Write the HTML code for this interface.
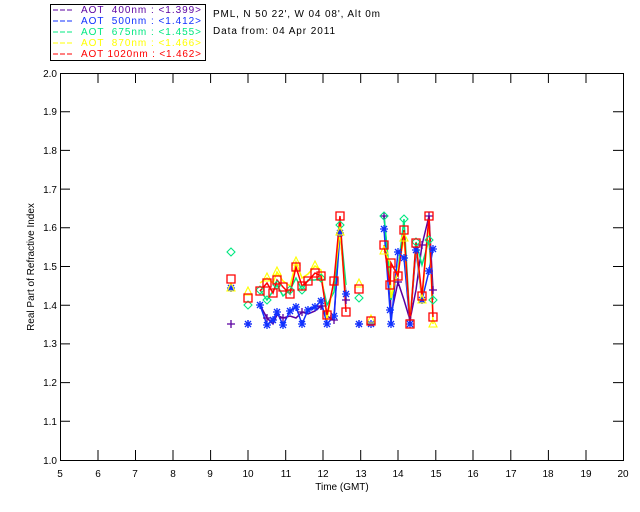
<!DOCTYPE html>
<html><head><meta charset="utf-8"><style>
body{margin:0;background:#fff;width:640px;height:512px;overflow:hidden}
svg{display:block}
text{font-family:"Liberation Sans",sans-serif;font-size:10px;white-space:pre}
</style></head><body>
<svg width="640" height="512" xmlns="http://www.w3.org/2000/svg">
<defs>
<path id="sq" d="M-4 -4h8v8h-8z" fill="none" stroke="red" stroke-width="1.3"/>
<path id="st" d="M-4 0h8M0 -4v8M-3 -3l6 6M-3 3l6 -6" stroke="#1030ff" stroke-width="1.3"/>
<path id="pl" d="M-4 0h8M0 -4v8" stroke="#5a00a0" stroke-width="1.3"/>
<path id="di" d="M0 -4l4 4l-4 4l-4 -4z" fill="none" stroke="#00e880" stroke-width="1.1"/>
<path id="tr" d="M0 -5l4 8h-8z" fill="none" stroke="#ffff00" stroke-width="1.1"/>
</defs>
<rect x="50.5" y="4.5" width="155" height="56" fill="none" stroke="#000"/>
<g stroke-width="1" stroke-dasharray="5,2">
<path d="M53 10h20" stroke="#5a00a0"/><path d="M53 21h20" stroke="#1030ff"/><path d="M53 32h20" stroke="#00e880"/><path d="M53 43h20" stroke="#ffff00"/><path d="M53 54h20" stroke="#ff0000"/>
</g>
<text x="81" y="13" fill="#5a00a0" textLength="120">AOT  400nm : &lt;1.399&gt;</text>
<text x="81" y="24" fill="#1030ff" textLength="120">AOT  500nm : &lt;1.412&gt;</text>
<text x="81" y="35" fill="#00e880" textLength="120">AOT  675nm : &lt;1.455&gt;</text>
<text x="81" y="46" fill="#ffff00" textLength="120">AOT  870nm : &lt;1.466&gt;</text>
<text x="81" y="57" fill="#ff0000" textLength="120">AOT 1020nm : &lt;1.462&gt;</text>
<text x="213" y="17" fill="#000" textLength="167">PML, N 50 22', W 04 08', Alt 0m</text>
<text x="213" y="34" fill="#000" textLength="122">Data from: 04 Apr 2011</text>
<rect x="60.5" y="73.5" width="563" height="387" fill="none" stroke="#000"/>
<g stroke="#000">
<path d="M98 460v-10M135.5 460v-10M173 460v-10M210.6 460v-10M248 460v-10M285.7 460v-10M323 460v-10M360.7 460v-10M398 460v-10M435.8 460v-10M473 460v-10M510.8 460v-10M548.4 460v-10M586 460v-10
M98 73v10M135.5 73v10M173 73v10M210.6 73v10M248 73v10M285.7 73v10M323 73v10M360.7 73v10M398 73v10M435.8 73v10M473 73v10M510.8 73v10M548.4 73v10M586 73v10
M60 111.7h10M60 150.4h10M60 189.1h10M60 227.8h10M60 266.5h10M60 305.2h10M60 343.9h10M60 382.6h10M60 421.3h10
M623 111.7h-10M623 150.4h-10M623 189.1h-10M623 227.8h-10M623 266.5h-10M623 305.2h-10M623 343.9h-10M623 382.6h-10M623 421.3h-10"/>
</g>
<g fill="#000" text-anchor="end">
<text x="57" y="77">2.0</text><text x="57" y="115">1.9</text><text x="57" y="154">1.8</text><text x="57" y="193">1.7</text><text x="57" y="231">1.6</text><text x="57" y="270">1.5</text><text x="57" y="309">1.4</text><text x="57" y="347">1.3</text><text x="57" y="386">1.2</text><text x="57" y="425">1.1</text><text x="57" y="464">1.0</text>
</g>
<g fill="#000" text-anchor="middle">
<text x="60" y="477">5</text><text x="98" y="477">6</text><text x="135" y="477">7</text><text x="173" y="477">8</text><text x="210" y="477">9</text><text x="248" y="477">10</text><text x="286" y="477">11</text><text x="323" y="477">12</text><text x="361" y="477">13</text><text x="398" y="477">14</text><text x="436" y="477">15</text><text x="473" y="477">16</text><text x="511" y="477">17</text><text x="548" y="477">18</text><text x="586" y="477">19</text><text x="623" y="477">20</text>
<text x="342" y="490">Time (GMT)</text>
<text transform="translate(34 267) rotate(-90)">Real Part of Refractive Index</text>
</g>
<g fill="none" stroke-width="1.5">
<polyline stroke="#5a00a0" points="260,305 267,318 273,324 277,315 283,318 290,316 296,318 302,312 308,314 315,311 321,306 327,316 334,320 340,225 346,300"/>
<polyline stroke="#5a00a0" points="384,216 390,285 391,315 398,282 404,300 410,320 416,290 422,245 429,216 433,290"/>
<polyline stroke="#1030ff" points="260,305 267,325 273,320 277,312 283,325 290,311 296,307 302,324 308,310 315,307 321,301 327,324 334,316 340,233 346,294"/>
<polyline stroke="#1030ff" points="384,229 390,310 391,324 398,252 404,258 410,324 416,250 422,300 429,271 433,249"/>
<polyline stroke="#00e880" points="260,290 267,300 273,291 277,285 283,296 290,290 296,278 302,290 308,280 315,280 321,278 327,305 334,292 340,225 346,285"/>
<polyline stroke="#00e880" points="384,216 390,278 391,300 398,270 404,219 410,322 416,242 422,265 429,240 433,300"/>
<polyline stroke="#ffff00" points="260,283 267,278 273,283 277,272 283,281 290,286 296,262 302,278 308,274 315,266 321,270 327,320 334,280 340,232 346,300"/>
<polyline stroke="#ffff00" points="384,251 390,262 391,298 398,270 404,238 410,322 416,245 422,300 429,220 433,324"/>
<polyline stroke="#ff0000" points="260,291 267,283 273,293 277,280 283,287 290,294 296,267 302,286 308,281 315,273 321,276 327,315 334,281 340,216 346,312"/>
<polyline stroke="#ff0000" points="384,245 390,285 391,263 398,276 404,230 410,324 416,243 422,296 429,216 433,317"/>
</g>
<g>
<use href="#pl" x="231" y="324"/><use href="#pl" x="248" y="324"/><use href="#pl" x="267" y="318"/><use href="#pl" x="283" y="318"/><use href="#pl" x="302" y="312"/><use href="#pl" x="321" y="306"/><use href="#pl" x="334" y="320"/><use href="#pl" x="346" y="300"/><use href="#pl" x="359" y="324"/><use href="#pl" x="384" y="216"/><use href="#pl" x="398" y="282"/><use href="#pl" x="410" y="320"/><use href="#pl" x="422" y="245"/><use href="#pl" x="429" y="216"/><use href="#pl" x="433" y="290"/>
<use href="#st" x="231" y="288"/><use href="#st" x="248" y="324"/><use href="#st" x="260" y="305"/><use href="#st" x="267" y="325"/><use href="#st" x="273" y="320"/><use href="#st" x="277" y="312"/><use href="#st" x="283" y="325"/><use href="#st" x="290" y="311"/><use href="#st" x="296" y="307"/><use href="#st" x="302" y="324"/><use href="#st" x="308" y="310"/><use href="#st" x="315" y="307"/><use href="#st" x="321" y="301"/><use href="#st" x="327" y="324"/><use href="#st" x="334" y="316"/><use href="#st" x="340" y="233"/><use href="#st" x="346" y="294"/><use href="#st" x="359" y="324"/><use href="#st" x="371" y="324"/><use href="#st" x="384" y="229"/><use href="#st" x="390" y="310"/><use href="#st" x="391" y="324"/><use href="#st" x="398" y="252"/><use href="#st" x="404" y="258"/><use href="#st" x="410" y="324"/><use href="#st" x="416" y="250"/><use href="#st" x="422" y="300"/><use href="#st" x="429" y="271"/><use href="#st" x="433" y="249"/>
<use href="#di" x="231" y="252"/><use href="#di" x="248" y="305"/><use href="#di" x="260" y="290"/><use href="#di" x="267" y="300"/><use href="#di" x="277" y="285"/><use href="#di" x="290" y="290"/><use href="#di" x="302" y="290"/><use href="#di" x="321" y="278"/><use href="#di" x="340" y="225"/><use href="#di" x="359" y="298"/><use href="#di" x="384" y="216"/><use href="#di" x="404" y="219"/><use href="#di" x="416" y="242"/><use href="#di" x="429" y="240"/><use href="#di" x="433" y="300"/>
<use href="#tr" x="231" y="288"/><use href="#tr" x="248" y="292"/><use href="#tr" x="267" y="278"/><use href="#tr" x="277" y="272"/><use href="#tr" x="296" y="262"/><use href="#tr" x="315" y="266"/><use href="#tr" x="340" y="232"/><use href="#tr" x="359" y="284"/><use href="#tr" x="371" y="320"/><use href="#tr" x="384" y="251"/><use href="#tr" x="404" y="238"/><use href="#tr" x="422" y="300"/><use href="#tr" x="433" y="324"/>
<use href="#sq" x="231" y="279"/><use href="#sq" x="248" y="298"/><use href="#sq" x="260" y="291"/><use href="#sq" x="267" y="283"/><use href="#sq" x="273" y="293"/><use href="#sq" x="277" y="280"/><use href="#sq" x="283" y="287"/><use href="#sq" x="290" y="294"/><use href="#sq" x="296" y="267"/><use href="#sq" x="302" y="286"/><use href="#sq" x="308" y="281"/><use href="#sq" x="315" y="273"/><use href="#sq" x="321" y="276"/><use href="#sq" x="327" y="315"/><use href="#sq" x="334" y="281"/><use href="#sq" x="340" y="216"/><use href="#sq" x="346" y="312"/><use href="#sq" x="359" y="289"/><use href="#sq" x="371" y="321"/><use href="#sq" x="384" y="245"/><use href="#sq" x="390" y="285"/><use href="#sq" x="391" y="263"/><use href="#sq" x="398" y="276"/><use href="#sq" x="404" y="230"/><use href="#sq" x="410" y="324"/><use href="#sq" x="416" y="243"/><use href="#sq" x="422" y="296"/><use href="#sq" x="429" y="216"/><use href="#sq" x="433" y="317"/>
</g>
</svg>
</body></html>
